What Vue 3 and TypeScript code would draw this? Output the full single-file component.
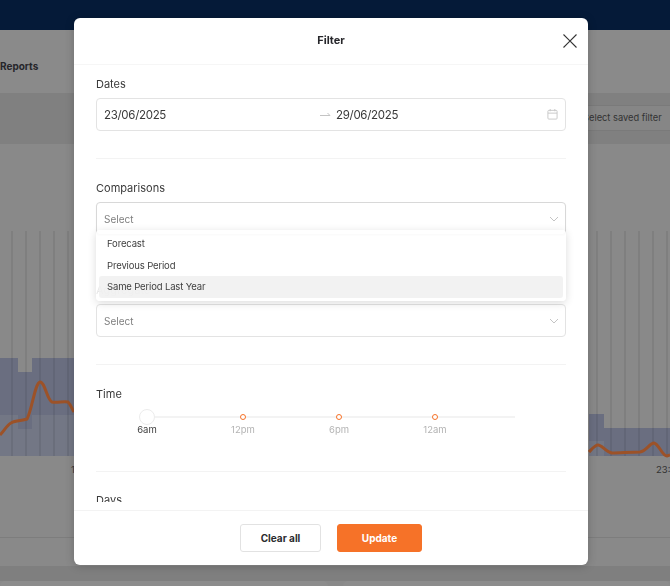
<script setup lang="ts">
const times = [
  { label: '6am', active: true },
  { label: '12pm', active: false },
  { label: '6pm', active: false },
  { label: '12am', active: false },
]
const options = ['Forecast', 'Previous Period', 'Same Period Last Year']
const gridLeft = [12, 26, 40, 54, 68]
const gridRight = [597, 611, 625, 639, 653, 667]
</script>

<template>
  <div class="page">
    <header class="topbar"></header>
    <nav class="nav"><span class="nav-link">Reports</span></nav>
    <div class="toolbar">
      <div class="saved">Select saved filter</div>
    </div>
    <svg class="chart" width="670" height="344" viewBox="0 144 670 344">
      <path d="M0 358H18V372H32V358H74V415H32V429H18V415H0Z" fill="#6a6e80" />
      <path d="M0 415H18V429H32V415H74V456H0Z" fill="#737785" />
      <path d="M589 414H604V428H670V456H589Z" fill="#6a6e80" />
      <path d="M589 441H604V456H589Z" fill="#737785" />
      <g stroke="#000" stroke-opacity="0.07" stroke-width="2">
        <line v-for="x in gridLeft" :key="x" :x1="x" :x2="x" y1="231" y2="456" />
        <line v-for="x in gridRight" :key="x" :x1="x" :x2="x" y1="231" y2="456" />
      </g>
      <path d="M0 435C4 431 7 425 11 423C16 420 22 421 27 419C32 410 35 383 40 382C45 382 47 400 52 402C58 403 63 401 68 402C71 405 72 409 74 412" fill="none" stroke="#9c5228" stroke-width="3" />
      <path d="M589 452C592 449 595 445 598 445C602 445 606 452 612 453C620 453 630 452 640 452C646 451 650 443 654 443C659 444 662 456 667 456L670 455" fill="none" stroke="#9c5228" stroke-width="3" />
      <text x="71" y="473" class="axis">1</text>
      <text x="656" y="473" class="axis">23:30</text>
    </svg>
    <div class="below"></div>
    <div class="below-plain"></div>
    <div class="below-dark"></div>
    <div class="cards">
      <div class="card"></div>
      <div class="card"></div>
    </div>
  </div>

  <div class="modal">
    <div class="modal-head">
      <span class="modal-title">Filter</span>
      <button class="close" aria-label="Close">
        <svg width="16" height="16" viewBox="0 0 16 16"><path d="M1.5 1.5L14.500 14.500M14.500 1.500L1.500 14.500" stroke="#333" stroke-width="1.100" fill="none" /></svg>
      </button>
    </div>

    <div class="modal-body">
      <section class="group dates">
        <label class="label">Dates</label>
        <div class="field date-field">
          <span class="date-start">23/06/2025</span>
          <svg class="arrow" width="11" height="6" viewBox="0 0 11 6"><path d="M0 3.500H10M7.500 1L10 3.500" stroke="#c4c4c4" fill="none" /></svg>
          <span class="date-end">29/06/2025</span>
          <svg width="11" height="11" viewBox="0 0 12 12" fill="none" stroke="#c6c6c6"><rect x="1" y="1.500" width="10" height="9.500" rx="1" /><path d="M1 4.500H11M3.500 0V2.500M8.500 0V2.500" /></svg>
        </div>
      </section>

      <section class="group comparisons">
        <label class="label">Comparisons</label>
        <div class="field select-field open">
          <span>Select</span>
          <svg width="10" height="6" viewBox="0 0 10 6"><path d="M1 1L5 5L9 1" stroke="#c4c4c4" fill="none" /></svg>
        </div>
        <ul class="menu">
          <li v-for="(opt, i) in options" :key="opt" :class="{ hovered: i === 2 }">{{ opt }}</li>
        </ul>
      </section>

      <section class="group aggregate">
        <label class="label">Aggregate</label>
        <div class="field select-field">
          <span>Select</span>
          <svg width="10" height="6" viewBox="0 0 10 6"><path d="M1 1L5 5L9 1" stroke="#c4c4c4" fill="none" /></svg>
        </div>
      </section>

      <section class="group time">
        <label class="label">Time</label>
        <div class="slider">
          <div class="track"></div>
          <div v-for="t in times" :key="t.label" class="stop">
            <span class="dot-wrap"><span :class="t.active ? 'handle' : 'dot'"></span></span>
            <span class="stop-label" :class="{ current: t.active }">{{ t.label }}</span>
          </div>
        </div>
      </section>

      <section class="days">
        <label class="label">Days</label>
      </section>
    </div>

    <div class="modal-foot">
      <button class="btn ghost">Clear all</button>
      <button class="btn primary">Update</button>
    </div>
  </div>
</template>

<style>
html,
body {
  margin: 0;
  height: 100%;
  overflow: hidden;
}
</style>

<style scoped>
.page {
  width: 670px;
  height: 586px;
  overflow: hidden;
  background: #898989;
  font-family: Inter, "Liberation Sans", sans-serif;
}

.topbar {
  height: 30px;
  background: #051a38;
}

.nav {
  height: 63px;
  box-sizing: border-box;
  padding-top: 8px;
  display: flex;
  align-items: center;
  background: #8a8a8a;
}

.nav-link {
  font-size: 10px;
  font-weight: 700;
  color: #26262a;
}

.toolbar {
  height: 51px;
  box-sizing: border-box;
  padding-bottom: 2px;
  display: flex;
  justify-content: flex-end;
  align-items: center;
  background: #808080;
}

.saved {
  width: 90px;
  height: 26px;
  line-height: 24px;
  padding-left: 3px;
  font-size: 9.300px;
  color: #333;
  background: #868686;
  border-top: 1px solid #7a7a7a;
  border-bottom: 1px solid #7a7a7a;
  box-sizing: border-box;
}

.chart {
  display: block;
}

.axis {
  font-size: 9.500px;
  fill: #333;
  font-family: Inter, sans-serif;
}

.below {
  height: 49px;
  border-bottom: 1px solid #7d7d7d;
}

.below-plain {
  height: 28px;
}

.below-dark {
  height: 15px;
  background: #7f7f7f;
}

.cards {
  display: flex;
  gap: 15px;
  height: 6px;
}

.card {
  flex: 1;
  background: #8c8c8c;
  border-radius: 5px 5px 0 0;
}

.modal {
  position: fixed;
  top: 18px;
  left: 74px;
  width: 514px;
  height: 547px;
  display: flex;
  flex-direction: column;
  background: #fff;
  border-radius: 6px;
  box-shadow: 0 1px 10px rgba(0, 0, 0, 0.2);
  font-family: Inter, "Liberation Sans", sans-serif;
}

.modal-head {
  height: 47px;
  box-sizing: border-box;
  padding-bottom: 2px;
  flex: none;
  display: flex;
  align-items: center;
  justify-content: center;
  position: relative;
  border-bottom: 1px solid #f6f6f6;
}

.modal-title {
  font-size: 11px;
  font-weight: 700;
  color: #26262a;
}

.close {
  position: absolute;
  right: 10px;
  top: 15px;
  padding: 0;
  border: 0;
  background: none;
  line-height: 0;
}

.modal-body {
  flex: 1;
  min-height: 0;
  overflow: hidden;
  padding: 0 22px;
  margin-bottom: 8px;
}

.group {
  position: relative;
  border-bottom: 1px solid #f3f3f3;
}

.label {
  display: block;
  font-size: 11px;
  line-height: 14px;
  color: #3a3a3a;
  margin-bottom: 7px;
}

.dates {
  padding-top: 12px;
  padding-bottom: 27px;
}

.comparisons {
  padding-top: 22px;
  border-bottom: 0;
}

.aggregate {
  margin-top: 48px;
  padding-bottom: 27px;
}

.time {
  padding-top: 22px;
  height: 84px;
}

.days {
  padding-top: 21px;
}

.field {
  display: flex;
  align-items: center;
  box-sizing: border-box;
  height: 33px;
  padding: 0 7px;
  background: #fff;
  border: 1px solid #e3e3e3;
  border-radius: 4px;
  font-size: 10px;
  color: #7f7f7f;
}

.select-field {
  justify-content: space-between;
  padding-right: 6px;
}

.select-field.open {
  border-color: #d8d8d8;
  box-shadow: 0 1px 1px rgba(0, 0, 0, 0.1);
}

.date-field {
  color: #3a3a3a;
  font-size: 11.500px;
  letter-spacing: -0.3px;
}

.date-start {
  width: 216px;
}

.date-end {
  flex: 1;
  margin-left: 5px;
}

.menu {
  position: absolute;
  left: 0;
  right: 0;
  top: 71px;
  z-index: 2;
  margin: 0;
  padding: 3px;
  list-style: none;
  background: rgba(255, 255, 255, 0.88);
  border-radius: 4px;
  box-shadow: 0 2px 8px rgba(0, 0, 0, 0.14);
}

.menu li {
  height: 21.500px;
  line-height: 21.500px;
  padding-left: 8px;
  font-size: 9.500px;
  letter-spacing: -0.15px;
  color: #3f3f3f;
  border-radius: 3px;
}

.menu li.hovered {
  background: rgba(240, 240, 240, 0.85);
}

.slider {
  position: relative;
  display: flex;
  padding-left: 3px;
  margin-top: 10px;
}

.track {
  position: absolute;
  left: 51px;
  width: 368px;
  top: 5px;
  height: 2px;
  background: #f3f3f3;
}

.stop {
  position: relative;
  width: 96px;
  display: flex;
  flex-direction: column;
  align-items: center;
}

.dot-wrap {
  height: 12px;
  display: flex;
  align-items: center;
  justify-content: center;
}

.dot {
  box-sizing: border-box;
  width: 6px;
  height: 6px;
  border: 1.500px solid #f67228;
  border-radius: 50%;
  background: #fff;
}

.handle {
  flex: none;
  box-sizing: border-box;
  width: 16px;
  height: 16px;
  border: 1px solid #ececec;
  border-radius: 50%;
  background: #fff;
}

.stop-label {
  font-size: 9.500px;
  line-height: 13px;
  color: #b3b3b3;
}

.stop-label.current {
  color: #3f3f3f;
}

.modal-foot {
  height: 55px;
  flex: none;
  box-sizing: border-box;
  display: flex;
  align-items: center;
  justify-content: center;
  gap: 16px;
  border-top: 1px solid #f3f3f3;
}

.btn {
  height: 28px;
  border-radius: 3px;
  font-family: inherit;
  font-size: 10px;
  font-weight: 700;
  padding: 0;
}

.ghost {
  width: 81px;
  background: #fff;
  color: #2a2a2e;
  border: 1px solid #e2e2e2;
}

.primary {
  width: 85px;
  background: #f67228;
  color: #fff;
  border: 1px solid #f67228;
}
</style>
